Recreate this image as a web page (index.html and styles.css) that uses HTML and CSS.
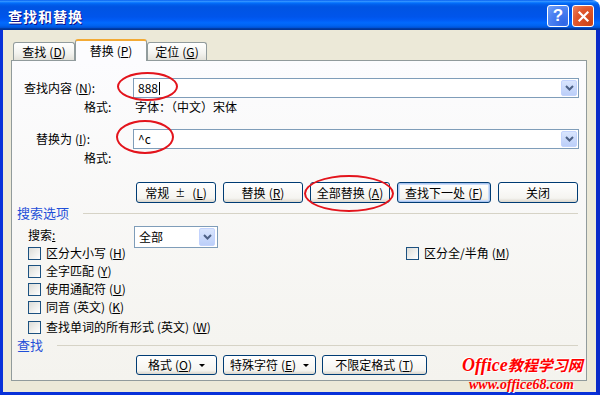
FILE: index.html
```html
<!DOCTYPE html>
<html>
<head>
    <title>查找和替换</title>
    <link rel="stylesheet" href="styles.css">
</head>
<body>
    <div class="window">
        <div class="titlebar">
            <span class="title">查找和替换</span>
            <div class="title-buttons">
                <span class="tb-btn tb-help">?</span>
                <span class="tb-btn tb-close">
                    <svg width="13" height="13" viewBox="0 0 13 13"><path d="M2.5 2.5L10.5 10.5M10.5 2.5L2.5 10.5" stroke="#fff" stroke-width="2.2" stroke-linecap="square" fill="none"/></svg>
                </span>
            </div>
        </div>

        <div class="client">
            <div class="tabs">
                <div class="tab tab-find">查找<span class="key">(<u>D</u>)</span></div>
                <div class="tab tab-replace active">替换<span class="key">(<u>P</u>)</span></div>
                <div class="tab tab-goto">定位<span class="key">(<u>G</u>)</span></div>
            </div>

            <div class="panel">
                <div class="field-row">
                    <span class="label label-find">查找内容<span class="key">(<u>N</u>)</span>:</span>
                    <div class="combo">
                        <span class="combo-text">888<span class="caret"></span></span>
                        <span class="drop-btn"><svg width="9" height="6" viewBox="0 0 9 6"><path d="M1 1L4.5 4.5L8 1" stroke="#4D6185" stroke-width="2" fill="none"/></svg></span>
                    </div>
                </div>
                <div class="format-row">
                    <span class="label label-format">格式:</span>
                    <span class="format-value">字体：（中文）宋体</span>
                </div>

                <div class="field-row field-gap">
                    <span class="label label-replace">替换为<span class="key">(<u>I</u>)</span>:</span>
                    <div class="combo">
                        <span class="combo-text">^c</span>
                        <span class="drop-btn"><svg width="9" height="6" viewBox="0 0 9 6"><path d="M1 1L4.5 4.5L8 1" stroke="#4D6185" stroke-width="2" fill="none"/></svg></span>
                    </div>
                </div>
                <div class="format-row">
                    <span class="label label-format">格式:</span>
                    <span class="format-value"></span>
                </div>

                <div class="button-row">
                    <button class="btn">常规 <span class="pm">±</span><span class="key">(<u>L</u>)</span></button>
                    <button class="btn">替换<span class="key">(<u>R</u>)</span></button>
                    <button class="btn">全部替换<span class="key">(<u>A</u>)</span></button>
                    <button class="btn btn-wide default">查找下一处<span class="key">(<u>F</u>)</span></button>
                    <button class="btn">关闭</button>
                </div>

                <div class="section">搜索选项</div>

                <div class="search-row">
                    <span>搜索<u>:</u></span>
                    <div class="select">
                        <span>全部</span>
                        <span class="drop-btn"><svg width="9" height="6" viewBox="0 0 9 6"><path d="M1 1L4.5 4.5L8 1" stroke="#4D6185" stroke-width="2" fill="none"/></svg></span>
                    </div>
                </div>

                <div class="options">
                    <div class="opt-col opt-left">
                        <div class="check-row"><span class="check"></span>区分大小写<span class="key">(<u>H</u>)</span></div>
                        <div class="check-row"><span class="check"></span>全字匹配<span class="key">(<u>Y</u>)</span></div>
                        <div class="check-row"><span class="check"></span>使用通配符<span class="key">(<u>U</u>)</span></div>
                        <div class="check-row"><span class="check"></span>同音<span class="key">(英文)</span><span class="key">(<u>K</u>)</span></div>
                        <div class="check-row last"><span class="check"></span>查找单词的所有形式<span class="key">(英文)</span><span class="key">(<u>W</u>)</span></div>
                    </div>
                    <div class="opt-col">
                        <div class="check-row"><span class="check"></span>区分全/半角<span class="key">(<u>M</u>)</span></div>
                    </div>
                </div>

                <div class="section section-find">查找</div>

                <div class="bottom-row">
                    <button class="btn btn-format">格式<span class="key">(<u>O</u>)</span><span class="arrow"></span></button>
                    <button class="btn btn-special">特殊字符<span class="key">(<u>E</u>)</span><span class="arrow"></span></button>
                    <button class="btn btn-nolimit">不限定格式<span class="key">(<u>T</u>)</span></button>
                </div>
            </div>
        </div>

        <!-- red marks drawn over the dialog -->
        <div class="mark mark-find"></div>
        <div class="mark mark-replace"></div>
        <div class="mark mark-all"></div>

        <div class="watermark">
            <div class="wm-title"><span class="wm-latin">Office</span>教程学习网</div>
            <div class="wm-url">www.office68.com</div>
        </div>
    </div>
</body>
</html>
```

FILE: styles.css
```css
body {
    margin: 0;
    background: #fff;
    font-family: "Noto Sans CJK SC", "Liberation Sans", sans-serif;
    font-size: 12px;
    line-height: 16px;
    color: #000;
}

.window {
    position: relative;
    width: 600px;
    height: 395px;
    display: flex;
    flex-direction: column;
}

/* title bar */
.titlebar {
    flex: none;
    height: 30px;
    box-sizing: border-box;
    padding: 2px 6px 0 8px;
    display: flex;
    align-items: center;
    justify-content: space-between;
    border-radius: 0 8px 0 0;
    background: linear-gradient(#0058EE 0%, #3593FF 4%, #288EFF 6%, #127DFF 8%, #036FFC 10%, #0262EE 14%, #0057E5 20%, #0054E3 24%, #0055EB 56%, #005BF5 66%, #026AFE 76%, #0062EF 86%, #0052D6 92%, #0040AB 94%, #003092 100%);
}

.title {
    color: #fff;
    font-weight: bold;
    font-size: 14px;
    letter-spacing: 1px;
    text-shadow: 1px 1px #0F1089;
}

.title-buttons {
    display: flex;
    gap: 3px;
}

.tb-btn {
    width: 22px;
    height: 22px;
    box-sizing: border-box;
    border: 1px solid #fff;
    border-radius: 3px;
    display: flex;
    align-items: center;
    justify-content: center;
    color: #fff;
}

.tb-help {
    background: radial-gradient(circle at 80% 85%, #2F66E6, #4C82F2 60%, #76A3F8);
    font-family: "Liberation Sans", sans-serif;
    font-weight: bold;
    font-size: 17px;
}

.tb-close {
    background: radial-gradient(circle at 85% 85%, #CC4418, #E0562C 60%, #EE8463);
}

/* window body */
.client {
    flex: 1;
    background: #ECE9D8;
    border-left: 3px solid #0831D9;
    border-right: 4px solid #0a2bc8;
    border-bottom: 3px solid #0831D9;
    padding: 9px 9px 0 8px;
}

.tabs {
    display: flex;
    align-items: flex-end;
    height: 21px;
    padding-left: 2px;
    position: relative;
    z-index: 1;
}

.tab {
    height: 18px;
    box-sizing: border-box;
    border: 1px solid #919B9C;
    border-bottom: none;
    border-radius: 3px 3px 0 0;
    background: linear-gradient(#FFFFFF, #F3F3EF 60%, #E3E2DA);
    display: flex;
    align-items: center;
    justify-content: center;
}

.tab-find {
    width: 62px;
}

.tab-replace {
    width: 72px;
}

.tab-goto {
    width: 60px;
}

.tab.active {
    height: 22px;
    margin-bottom: -1px;
    border-top: 2px solid #F3AA35;
    background: #FCFCFE;
}

.key {
    margin-left: 3px;
}

.panel {
    height: 321px;
    box-sizing: border-box;
    border: 1px solid #919B9C;
    background: linear-gradient(#FCFCFE, #F4F3EE);
    padding: 17px 7px 0 0;
}

.field-row {
    display: grid;
    grid-template-columns: 121px 1fr;
    align-items: center;
    height: 20px;
}

.field-gap {
    margin-top: 14px;
}

.label-find {
    padding-left: 12px;
}

.label-replace {
    padding-left: 24px;
}

.format-row {
    display: grid;
    grid-template-columns: 123px 1fr;
    height: 16px;
    margin-top: 1px;
}

.label-format {
    padding-left: 72px;
}

.combo {
    height: 20px;
    box-sizing: border-box;
    border: 1px solid #7F9DB9;
    background: #fff;
    display: flex;
    align-items: center;
    justify-content: space-between;
    padding: 0 1px 0 4px;
}

.combo-text {
    display: flex;
    align-items: center;
}

.caret {
    width: 1px;
    height: 13px;
    background: #000;
    margin-left: 1px;
}

.drop-btn {
    width: 16px;
    height: 16px;
    box-sizing: border-box;
    border: 1px solid #C3D3FD;
    border-radius: 2px;
    background: linear-gradient(#D9E5FD, #BCCFF9);
    display: flex;
    align-items: center;
    justify-content: center;
}

.button-row {
    display: flex;
    justify-content: flex-end;
    gap: 7px;
    margin-top: 16px;
    padding-right: 1px;
}

.btn {
    width: 80px;
    height: 21px;
    box-sizing: border-box;
    padding: 0;
    border: 1px solid #003C74;
    border-radius: 3px;
    background: linear-gradient(#FFFFFF, #F5F4F0 80%, #D9D5CB);
    font: inherit;
    color: #000;
    display: flex;
    align-items: center;
    justify-content: center;
}

.btn-wide {
    width: 94px;
}

.btn.default {
    box-shadow: inset 0 0 0 1px #A9C4F0, inset 0 0 0 2px #CEDEF8;
}

.pm {
    margin: 0 4px 0 6px;
    font-size: 10px;
}

.section {
    display: flex;
    align-items: center;
    gap: 14px;
    height: 16px;
    margin-top: 2px;
    margin-right: 1px;
    padding-left: 5px;
    color: #1F4FD8;
    font-size: 13px;
}

.section::after {
    content: "";
    flex: 1;
    height: 1px;
    background: #D6D3C6;
}

.search-row {
    display: grid;
    grid-template-columns: 106px 84px;
    align-items: start;
    height: 18px;
    margin-top: 5px;
    padding-left: 16px;
    line-height: 18px;
}

.select {
    height: 22px;
    box-sizing: border-box;
    border: 1px solid #7F9DB9;
    background: #fff;
    display: flex;
    align-items: center;
    justify-content: space-between;
    padding: 0 2px 0 4px;
    line-height: 16px;
}

.select .drop-btn {
    height: 18px;
}

.options {
    display: flex;
    padding-left: 16px;
}

.opt-left {
    width: 378px;
}

.check-row {
    height: 18px;
    display: flex;
    align-items: center;
}

.check-row.last {
    margin-top: 2px;
}

.check {
    width: 13px;
    height: 13px;
    box-sizing: border-box;
    border: 1px solid #1C5180;
    background: linear-gradient(135deg, #DCDCD7, #FFFFFF);
    margin-right: 5px;
}

.section-find {
    margin-top: 1px;
}

.bottom-row {
    display: flex;
    gap: 6px;
    margin-top: 2px;
    padding-left: 124px;
}

.bottom-row .btn {
    height: 20px;
}

.btn-format {
    width: 81px;
}

.btn-special {
    width: 93px;
}

.btn-nolimit {
    width: 105px;
}

.arrow {
    width: 0;
    height: 0;
    border-left: 3px solid transparent;
    border-right: 3px solid transparent;
    border-top: 3px solid #000;
    margin-left: 7px;
}

/* red hand-drawn ellipses */
.mark {
    position: absolute;
    border: 2px solid #E3141C;
    border-radius: 50%;
}

.mark-find {
    left: 117px;
    top: 72px;
    width: 57px;
    height: 25px;
}

.mark-replace {
    left: 116px;
    top: 120px;
    width: 54px;
    height: 30px;
}

.mark-all {
    left: 304px;
    top: 175px;
    width: 86px;
    height: 33px;
}

/* site watermark */
.watermark {
    position: absolute;
    left: 455px;
    top: 354px;
    width: 145px;
    color: #F00;
    font-style: italic;
    font-weight: bold;
}

.wm-title {
    padding-left: 7px;
    font-size: 15px;
    line-height: 21px;
    text-shadow: 1px 1px 0 #fff, -1px -1px 0 #fff;
}

.wm-latin {
    font-family: "Liberation Serif", serif;
    font-size: 18px;
}

.wm-url {
    margin-top: 2px;
    padding-left: 14px;
    font-family: "Liberation Serif", serif;
    font-size: 14px;
    line-height: 14px;
    text-shadow: 1px 1px 0 #fff;
}
```
